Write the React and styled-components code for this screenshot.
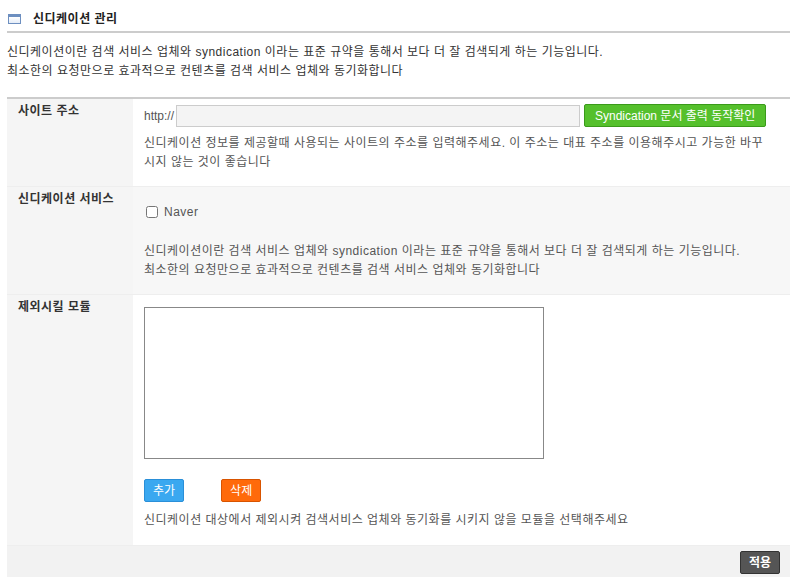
import React from "react";
import styled, { createGlobalStyle } from "styled-components";

const Global = createGlobalStyle`
  body { margin: 0; padding: 8px 5px 0 7px; font-family: "Liberation Sans", "Noto Sans CJK KR", sans-serif; font-size: 12px; line-height: 16px; letter-spacing: 0.5px; color: #333; background: #fff; }
`;

const Title = styled.h2`
  display: flex; align-items: center; gap: 12px; margin: 0; height: 22px;
  padding: 0 0 1px 1px; font-size: 12px; line-height: 16px; font-weight: bold; color: #222;
  border-bottom: 2px solid #ccc;
`;
const WinIcon = styled.span`
  width: 13px; height: 10px; border: 1px solid #6d8fc0; border-top-width: 3px;
  background: linear-gradient(#fff, #e4ecf7); box-sizing: border-box;
`;
const Desc = styled.p`
  margin: 0; padding: ${p => p.$pad || "11px 0 0 0"}; line-height: 19px; color: ${p => p.$c || "#333"};
`;
const Table = styled.div`
  margin-top: 16px; border-top: 2px solid #ccc;
`;
const Row = styled.div`
  display: grid; grid-template-columns: 126px 1fr; border-bottom: 1px solid #eee;
  background: ${p => p.$bg || "#fff"};
`;
const Label = styled.div`
  background: #f5f5f5; padding: 4px 0 0 11px; font-weight: bold; color: #333;
`;
const Cell = styled.div`
  padding: ${p => p.$pad || "5px 11px 14px 11px"};
`;
const Line = styled.div`display: flex; align-items: center; gap: 4px; height: 23px;`;
const Http = styled.span`color: #555; width: 32px; letter-spacing: 0;`;
const UrlInput = styled.input`
  width: 404px; height: 22px; box-sizing: border-box; border: 1px solid #ccc; background: #f4f4f4; margin-left: -4px;
`;
const Btn = styled.button`
  font-family: inherit; font-size: 12px; line-height: 16px; color: #fff; cursor: pointer; letter-spacing: 0;
  background: ${p => p.$bg}; border: 1px solid ${p => p.$bd}; border-radius: 2px;
  height: 23px; padding: 0 ${p => p.$px || "8px"}; font-weight: ${p => (p.$bold ? "bold" : "normal")};
`;
const Check = styled.label`
  display: flex; align-items: center; gap: 6px; color: #555; margin: 12px 0 22px 2px;
  input { margin: 0; width: 12px; height: 12px; }
`;
const Area = styled.textarea`
  width: 400px; height: 152px; box-sizing: border-box; border: 1px solid #888; resize: none; display: block; margin-top: 7px;
`;
const BtnRow = styled.div`display: flex; gap: 37px; margin: 20px 0 9px;`;
const Footer = styled.div`
  display: flex; justify-content: flex-end; background: #f2f2f2; padding: 5px 10px 5px; border-bottom: 1px solid #ddd;
`;

export default function App() {
  return (
    <>
      <Global />
      <Title><WinIcon />신디케이션 관리</Title>
      <Desc $pad="10px 0 0 0">
        신디케이션이란 검색 서비스 업체와 syndication 이라는 표준 규약을 통해서 보다 더 잘 검색되게 하는 기능입니다.<br />
        최소한의 요청만으로 효과적으로 컨텐츠를 검색 서비스 업체와 동기화합니다
      </Desc>
      <Table>
        <Row>
          <Label>사이트 주소</Label>
          <Cell>
            <Line>
              <Http>http://</Http>
              <UrlInput />
              <Btn $bg="#55c02c" $bd="#3a9a1a" $px="10px">Syndication 문서 출력 동작확인</Btn>
            </Line>
            <Desc $c="#555" $pad="7px 0 0 0">신디케이션 정보를 제공할때 사용되는 사이트의 주소를 입력해주세요. 이 주소는 대표 주소를 이용해주시고 가능한 바꾸<br />시지 않는 것이 좋습니다</Desc>
          </Cell>
        </Row>
        <Row $bg="#f7f7f7">
          <Label>신디케이션 서비스</Label>
          <Cell>
            <Check><input type="checkbox" />Naver</Check>
            <Desc $c="#555" $pad="0">
              신디케이션이란 검색 서비스 업체와 syndication 이라는 표준 규약을 통해서 보다 더 잘 검색되게 하는 기능입니다.<br />
              최소한의 요청만으로 효과적으로 컨텐츠를 검색 서비스 업체와 동기화합니다
            </Desc>
          </Cell>
        </Row>
        <Row>
          <Label>제외시킬 모듈</Label>
          <Cell $pad="5px 11px 15px 11px">
            <Area />
            <BtnRow>
              <Btn $bg="#3aa8f0" $bd="#2a8fd8">추가</Btn>
              <Btn $bg="#ff6a0a" $bd="#d85400">삭제</Btn>
            </BtnRow>
            <Desc $c="#555" $pad="0">신디케이션 대상에서 제외시켜 검색서비스 업체와 동기화를 시키지 않을 모듈을 선택해주세요</Desc>
          </Cell>
        </Row>
        <Footer><Btn $bg="#555" $bd="#333" $bold>적용</Btn></Footer>
      </Table>
    </>
  );
}
